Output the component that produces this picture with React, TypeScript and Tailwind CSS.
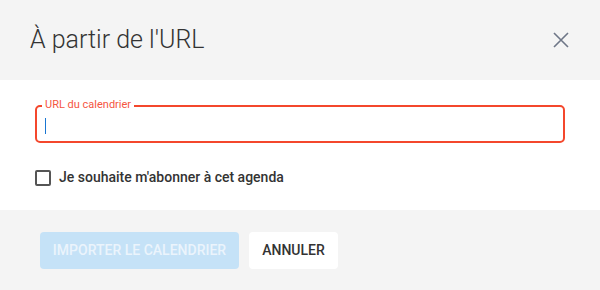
import { useState } from 'react';

export default function App() {
  const [url, setUrl] = useState('');
  const [subscribe, setSubscribe] = useState(false);

  return (
    <div className="w-[600px] h-[290px] flex flex-col font-['Roboto',sans-serif] text-[#333]">
      <div className="h-[80px] bg-[#f4f4f4] flex items-center justify-between pl-[30px] pr-[31px]">
        <h1 className="text-[25px] leading-[28px] font-light text-[#333]">À partir de l'URL</h1>
        <button type="button" className="text-[#6e7687]" aria-label="Fermer">
          <svg width="16" height="16" viewBox="0 0 16 16" fill="none" stroke="currentColor" strokeWidth="1.6">
            <path d="M1 1 L15 15 M15 1 L1 15" />
          </svg>
        </button>
      </div>

      <div className="h-[130px] bg-white px-[35px] pt-[25px]">
        <div className="relative h-[38px] border-2 border-[#f4472c] rounded-[5px]">
          <label className="absolute left-[5px] top-[-9px] bg-white px-[3px] text-[11px] leading-[14px] text-[#f5553f]">
            URL du calendrier
          </label>
          <input
            type="text"
            value={url}
            onChange={(e) => setUrl(e.target.value)}
            className="w-full h-full pl-[8px] pr-2 outline-none text-[14px] bg-transparent"
          />
          {url === '' && (
            <span className="absolute left-[8px] top-[11px] w-px h-[16px] bg-[#1976d2]" />
          )}
        </div>

        <label className="mt-[24px] flex items-center gap-[8px] cursor-pointer">
          <input
            type="checkbox"
            checked={subscribe}
            onChange={(e) => setSubscribe(e.target.checked)}
            className="appearance-none w-[16px] h-[16px] border-2 border-[#555] rounded-[2px] bg-white checked:bg-[#555]"
          />
          <span className="text-[14px] font-medium text-[#333]">Je souhaite m'abonner à cet agenda</span>
        </label>
      </div>

      <div className="h-[80px] bg-[#f4f4f4] flex items-center gap-[10px] pl-[40px]">
        <button
          type="button"
          disabled
          className="w-[199px] h-[37px] rounded-[4px] bg-[#c5e2f7] text-[#ebf4fc] text-[14px] font-medium uppercase"
        >
          Importer le calendrier
        </button>
        <button
          type="button"
          className="w-[89px] h-[37px] rounded-[4px] bg-white text-[#333] text-[14px] font-medium uppercase"
        >
          Annuler
        </button>
      </div>
    </div>
  );
}
